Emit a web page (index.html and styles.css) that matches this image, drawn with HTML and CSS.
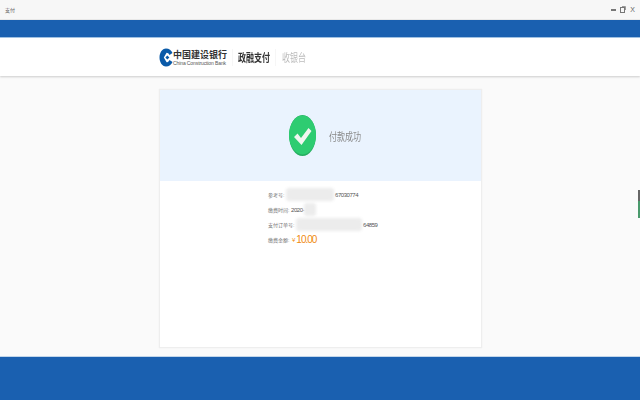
FILE: index.html
```html
<html>
    <head>
        <meta charset="utf-8">
        <title>支付</title>
        <link rel="stylesheet" href="styles.css">
    </head>
    <body>
        <div class="titlebar">
            <span class="titleText">支付</span>
            <div class="winButtons">
                <span class="winMin"></span>
                <svg class="winMax" width="6" height="7" viewBox="0 0 6 7">
                    <rect x="0.5" y="1.5" width="4" height="5" fill="none" stroke="#777"></rect>
                    <path d="M2 0.5H5.5V4" fill="none" stroke="#999"></path>
                </svg>
                <span class="winClose">X</span>
            </div>
        </div>
        <div class="blueBar"></div>
        <div class="header">
            <div class="headerInner">
                <svg class="bankLogo" width="14" height="19" viewBox="0 0 14 19">
                    <path d="M7 0.5C3 0.5 0.5 5 0.5 9.5S3 18.5 7 18.5C10 18.5 12.5 16.5 13.5 14L10.5 12C9.8 13.4 8.8 14.3 7.6 14.3L4.8 9.5L7.6 4.7C8.8 4.7 9.8 5.6 10.5 7L13.5 5C12.5 2.5 10 0.5 7 0.5Z" fill="#0a5aa8"></path>
                    <path d="M8.3 7.4L10.4 9.5L8.3 11.6L6.4 9.5Z" fill="#0a5aa8"></path>
                </svg>
                <div class="bankName">
                    <div class="bankCn">中国建设银行</div>
                    <div class="bankEn">China Construction Bank</div>
                </div>
                <div class="headTitle"><span class="squeeze">政融支付</span></div>
                <div class="headSub"><span class="squeeze">收银台</span></div>
            </div>
        </div>
        <div class="main">
            <div class="card">
                <div class="success">
                    <svg class="okIcon" width="27" height="41" viewBox="0 0 27 41">
                        <ellipse cx="13.5" cy="20.5" rx="13.5" ry="20.5" fill="#27ae60"></ellipse>
                        <ellipse cx="13.5" cy="20" rx="13.5" ry="19.5" fill="#2ecc71"></ellipse>
                        <path d="M5 22L8.5 18.5L12 23L19.5 13L22.5 16L12.5 30Z" fill="#f1f6f0"></path>
                    </svg>
                    <span class="successText"><span class="squeeze">付款成功</span></span>
                </div>
                <div class="info">
                    <div class="row">
                        <span class="label labelRef">参考号:</span>
                        <span class="blur blurRef"></span>
                        <span class="value">67030774</span>
                    </div>
                    <div class="row">
                        <span class="label labelDate">缴费时间:</span>
                        <span class="value">2020-</span>
                        <span class="blur blurDate"></span>
                    </div>
                    <div class="row">
                        <span class="label labelOrder">支付订单号:</span>
                        <span class="blur blurOrder"></span>
                        <span class="value">64859</span>
                    </div>
                    <div class="row">
                        <span class="label labelDate">缴费金额:</span>
                        <span class="yen">¥</span>
                        <span class="amount">10.00</span>
                    </div>
                </div>
            </div>
        </div>
        <div class="footer"></div>
        <div class="sideTab"></div>
    </body>
</html>
```

FILE: styles.css
```css
html, body {
    margin: 0;
    padding: 0;
}

body {
    width: 640px;
    height: 400px;
    overflow: hidden;
    display: flex;
    flex-direction: column;
    background-color: #fafafa;
    font-family: "Liberation Sans", "Noto Sans CJK SC", sans-serif;
}

/* the whole shot is squeezed sideways, so the big text is too */
.squeeze {
    display: inline-block;
    transform: scaleX(0.73);
    transform-origin: left center;
    white-space: nowrap;
}

.titlebar {
    height: 19px;
    flex: none;
    padding: 0 5px;
    display: flex;
    align-items: center;
    justify-content: space-between;
    background-color: #f7f7f7;
    border-bottom: 1px solid #e8e8e8;
}

.titleText {
    font-size: 5px;
    color: #666;
}

.winButtons {
    display: flex;
    align-items: center;
    gap: 4px;
}

.winMin {
    width: 5px;
    height: 2px;
    background-color: #777;
}

.winClose {
    font-size: 7px;
    color: #666;
}

.blueBar {
    height: 17px;
    flex: none;
    background-color: #1a60b0;
    border-bottom: 1px solid #9cc0e4;
}

.header {
    height: 38px;
    flex: none;
    background-color: white;
    box-shadow: 0 1px 2px #ccc;
}

.headerInner {
    margin-left: 159px;
    height: 38px;
    display: flex;
    align-items: center;
}

.bankName {
    width: 59px;
    margin-right: 5px;
    padding-top: 1px;
    border-right: 1px solid #f6f6f6;
}

.bankCn {
    font-size: 9px;
    line-height: 10px;
    font-weight: bold;
    color: #333;
}

.bankEn {
    font-size: 5px;
    line-height: 6px;
    color: #555;
    letter-spacing: -0.1px;
}

.headTitle {
    font-size: 11px;
    font-weight: bold;
    color: #333;
    width: 37px;
    margin-right: 6px;
    padding-bottom: 1px;
    border-right: 1px solid #f6f6f6;
}

.headSub {
    font-size: 11px;
    color: #bbb;
}

.main {
    flex: 1;
    padding-top: 13px;
}

.card {
    width: 321px;
    height: 257px;
    margin-left: 159px;
    background-color: white;
    border: 1px solid #eee;
    box-shadow: 0 0 1px #e4e4e4;
}

.success {
    height: 91px;
    display: flex;
    align-items: center;
    gap: 13px;
    padding-left: 129px;
    background-color: #eaf3fe;
}

.successText {
    font-size: 11px;
    color: #888;
}

.info {
    padding: 6px 0 0 108px;
}

.row {
    height: 15px;
    display: flex;
    align-items: center;
    font-size: 5px;
    color: #777;
}

.labelRef {
    width: 18px;
}

.labelDate {
    width: 23px;
}

.labelOrder {
    width: 28px;
}

.value {
    color: #555;
    font-size: 6px;
    letter-spacing: -0.45px;
}

.blur {
    height: 13px;
    border-radius: 3px;
    background-color: #ececec;
    filter: blur(1.5px);
}

.blurRef {
    width: 48px;
    margin-right: 1px;
}

.blurDate {
    width: 12px;
}

.blurOrder {
    width: 66px;
    margin-right: 1px;
}

.amount {
    font-size: 10px;
    color: #f08a10;
    letter-spacing: -1px;
}

.yen {
    font-size: 6px;
    color: #f08a10;
    margin: 0 1px 0 1px;
}

.footer {
    height: 43px;
    flex: none;
    background-color: #1a60b0;
    border-top: 1px solid #c2d6ea;
}

.sideTab {
    position: absolute;
    right: 0;
    top: 190px;
    width: 2px;
    height: 28px;
    background: linear-gradient(#666 40%, #4a9a6c 40%);
}
```
